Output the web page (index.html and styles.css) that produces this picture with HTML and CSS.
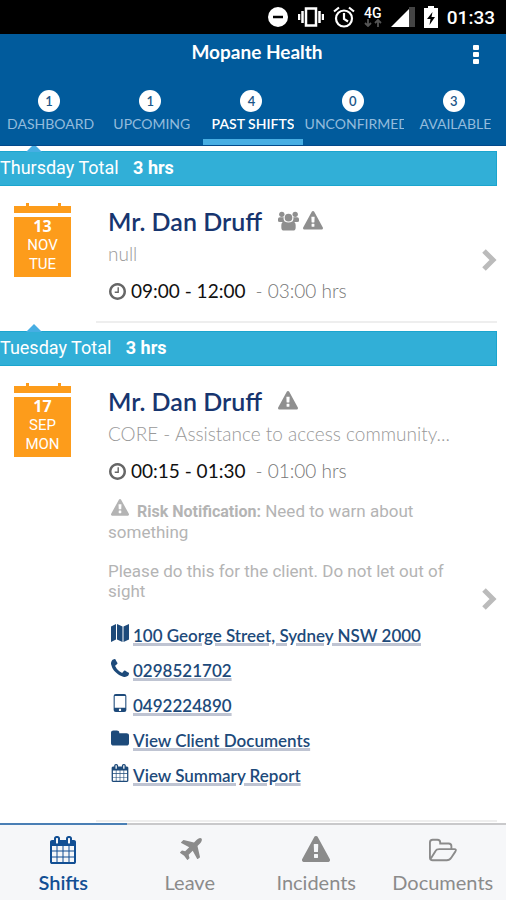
FILE: index.html
```html
<!DOCTYPE html>
<html lang="en">
<head>
<meta charset="utf-8">
<meta name="viewport" content="width=device-width, initial-scale=1">
<title>Mopane Health</title>
<link rel="stylesheet" href="styles.css">
</head>
<body>
<svg class="defs" aria-hidden="true">
  <symbol id="warning" viewBox="0 0 1792 1792"><path d="M1024 1375v-190q0-14-9.500-23.500t-22.500-9.500h-192q-13 0-22.500 9.500t-9.500 23.500v190q0 14 9.500 23.500t22.500 9.500h192q13 0 22.500-9.500t9.500-23.500zm-2-374l18-459q0-12-10-19-13-11-24-11h-220q-11 0-24 11-10 7-10 21l17 457q0 10 10 16.500t24 6.500h185q14 0 23.500-6.500t10.500-16.500zm-14-934l768 1408q35 63-2 126-17 29-46.500 46t-63.500 17h-1536q-34 0-63.500-17t-46.500-46q-37-63-2-126l768-1408q17-31 47-49t65-18 65 18 47 49z"/></symbol>
  <symbol id="clock" viewBox="128 128 1536 1536"><path d="M1024 544v448q0 14-9 23t-23 9h-320q-14 0-23-9t-9-23v-64q0-14 9-23t23-9h224v-352q0-14 9-23t23-9h64q14 0 23 9t9 23zm416 352q0-148-73-273t-198-198-273-73-273 73-198 198-73 273 73 273 198 198 273 73 273-73 198-198 73-273zm224 0q0 209-103 385.500t-279.500 279.500-385.500 103-385.500-103-279.500-279.500-103-385.500 103-385.500 279.500-279.500 385.500-103 385.500 103 279.500 279.500 103 385.500z"/></symbol>
  <symbol id="calendar" viewBox="0 0 1792 1792"><path d="M192 1664h288v-288h-288v288zm352 0h320v-288h-320v288zm-352-352h288v-320h-288v320zm352 0h320v-320h-320v320zm-352-384h288v-288h-288v288zm736 736h320v-288h-320v288zm-384-736h320v-288h-320v288zm768 736h288v-288h-288v288zm-384-352h320v-320h-320v320zm-352-864v-288q0-13-9.500-22.500t-22.500-9.500h-64q-13 0-22.500 9.500t-9.500 22.500v288q0 13 9.500 22.500t22.500 9.500h64q13 0 22.500-9.500t9.500-22.500zm736 864h288v-320h-288v320zm-384-384h320v-288h-320v288zm384 0h288v-288h-288v288zm32-480v-288q0-13-9.500-22.500t-22.500-9.500h-64q-13 0-22.500 9.500t-9.500 22.500v288q0 13 9.500 22.500t22.500 9.500h64q13 0 22.500-9.500t9.500-22.500zm384-64v1280q0 52-38 90t-90 38h-1408q-52 0-90-38t-38-90v-1280q0-52 38-90t90-38h128v-96q0-66 47-113t113-47h64q66 0 113 47t47 113v96h384v-96q0-66 47-113t113-47h64q66 0 113 47t47 113v96h128q52 0 90 38t38 90z"/></symbol>
  <symbol id="plane" viewBox="0 0 1792 1792"><path d="M1632 160q44 52 12 148t-108 172l-161 161 160 696q5 19-12 33l-128 96q-7 6-19 6-4 0-7-1-15-3-21-16l-279-508-259 259 53 194q5 17-8 31l-96 96q-9 9-23 9h-2q-15-2-24-13l-189-252-252-189q-11-7-13-23-1-13 9-25l96-97q9-9 23-9 6 0 8 1l194 53 259-259-508-279q-14-8-17-24-2-16 9-27l128-128q14-13 30-8l665 159 160-160q76-76 172-108t148 12z"/></symbol>
  <symbol id="folder" viewBox="64 64 1664 1536"><path d="M1728 608v704q0 92-66 158t-158 66h-1216q-92 0-158-66t-66-158v-960q0-92 66-158t158-66h320q92 0 158 66t66 158v32h672q92 0 158 66t66 158z"/></symbol>
  <symbol id="phone" viewBox="192 128 1408 1408"><path d="M1600 1240q0 27-10 70.500t-21 68.500q-21 50-122 106-94 51-186 51-27 0-52.500-3.500t-57.500-12.500-47.500-14.500-55.500-20.500-49-18q-98-35-175-83-128-79-264.500-215.500t-215.500-264.500q-48-77-83-175-3-9-18-49t-20.500-55.500-14.500-47.500-12.500-57.500-3.500-52.500q0-92 51-186 56-101 106-122 25-11 68.500-21t70.500-10q14 0 21 3 18 6 53 76 11 19 30 54t35 63.500 31 53.500q3 4 17.500 25t21.500 35.500 7 28.500q0 20-28.500 50t-62 55-62 53-28.500 46q0 9 5 22.500t8.500 20.500 14 24 11.500 19q76 137 174 235t235 174q2 1 19 11.500t24 14 20.500 8.500 22.500 5q18 0 46-28.500t53-62 55-62 50-28.500q14 0 28.500 7t35.500 21.500 25 17.500q25 15 53.500 31t63.500 35 54 30q70 35 76 53 3 7 3 21z"/></symbol>
  <symbol id="users" viewBox="0 0 22 20"><circle cx="4" cy="3" r="2.800"/><circle cx="18" cy="3" r="2.800"/><path d="M0 10V8q0-2 2-2h4q-1 2 1 5H2q-2 0-2-1zM22 10V8q0-2-2-2h-4q1 2-1 5h5q2 0 2-1z"/><circle cx="11" cy="6.500" r="4"/><path d="M3.500 17v-2.500q0-4 3.500-4 4 2 8 0 3.500 0 3.500 4V17q0 3-3 3h-9q-3 0-3-3z"/></symbol>
  <symbol id="map" viewBox="0 0 18 18"><path d="M0 2.500 5 0v15.500L0 18zM6 0l5.500 2.500V18L6 15.500zM12.500 2.500 18 0v15.500L12.500 18z"/></symbol>
  <symbol id="mobile" viewBox="0 0 12 17"><path fill-rule="evenodd" d="M2 0h8q2 0 2 2v13q0 2-2 2H2q-2 0-2-2V2q0-2 2-2zM1 2v11h10V2zM5 14v2h2v-2z"/></symbol>
  <symbol id="chevron" viewBox="0 0 16 24"><path class="chevron-line" d="M3 3l9 9-9 9"/></symbol>
</svg>

<header class="header">
  <div class="status">
    <svg width="22" height="22" viewBox="0 0 22 22" aria-hidden="true"><circle cx="11" cy="11" r="10" fill="#fff"/><path d="M6 11h10" stroke="#000" stroke-width="2.500"/></svg>
    <svg width="26" height="22" viewBox="0 0 26 22" aria-hidden="true"><path d="M8 2.500h10v17H8zM4.500 5v12M21.500 5v12M1 8v6M25 8v6" fill="none" stroke="#fff" stroke-width="2.500"/></svg>
    <svg width="22" height="22" viewBox="0 0 22 22" aria-hidden="true"><g fill="none" stroke="#fff" stroke-width="2.200"><circle cx="11" cy="12.500" r="8"/><path d="M11 7v6l4 2.500M1 5.500l5-4M21 5.500l-5-4"/></g></svg>
    <span class="network">4G<svg width="18" height="8" viewBox="0 0 18 8" aria-hidden="true"><path d="M4 0v7M1 4l3 3 3-3M14 8V1M11 4l3-3 3 3" fill="none" stroke="#555" stroke-width="1.800"/></svg></span>
    <svg width="24" height="20" viewBox="0 0 24 20" aria-hidden="true"><path d="M18 0h6v20h-6z" fill="#444"/><path d="M0 20 18 2v18z" fill="#fff"/></svg>
    <svg width="14" height="22" viewBox="0 0 14 22" aria-hidden="true"><path d="M0 2h4V0h6v2h4v20H0z" fill="#fff"/><path d="M8.500 6 3 13h3.500l-1 6L11 11H7.500z" fill="#000"/></svg>
    <span class="time">01:33</span>
  </div>
  <div class="appbar">
    <h1 class="title">Mopane Health</h1>
    <button class="more" aria-label="More options"><i></i><i></i><i></i></button>
  </div>
  <nav class="tabs" aria-label="Shift lists">
    <a class="tab" href="#dashboard"><span class="badge">1</span><span class="tab-label">DASHBOARD</span></a>
    <a class="tab" href="#upcoming"><span class="badge">1</span><span class="tab-label">UPCOMING</span></a>
    <a class="tab tab-active" href="#past"><span class="badge">4</span><span class="tab-label">PAST SHIFTS</span></a>
    <a class="tab" href="#unconfirmed"><span class="badge">0</span><span class="tab-label">UNCONFIRMED</span></a>
    <a class="tab" href="#available"><span class="badge">3</span><span class="tab-label">AVAILABLE</span></a>
  </nav>
</header>

<main class="list">
  <section class="day">
    <h2 class="banner">Thursday Total <b>3 hrs</b></h2>
    <article class="shift">
      <div class="date"><b>13</b><span>NOV</span><span>TUE</span></div>
      <div class="details">
        <h3 class="name">Mr. Dan Druff <svg class="flag group"><use href="#users"/></svg><svg class="flag"><use href="#warning"/></svg></h3>
        <p class="service">null</p>
        <p class="hours"><svg class="clock"><use href="#clock"/></svg>09:00 - 12:00 <span class="duration">- 03:00 hrs</span></p>
      </div>
      <svg class="chevron"><use href="#chevron"/></svg>
    </article>
  </section>
  <section class="day">
    <h2 class="banner">Tuesday Total <b>3 hrs</b></h2>
    <article class="shift">
      <div class="date"><b>17</b><span>SEP</span><span>MON</span></div>
      <div class="details">
        <h3 class="name">Mr. Dan Druff <svg class="flag"><use href="#warning"/></svg></h3>
        <p class="service">CORE - Assistance to access community...</p>
        <p class="hours"><svg class="clock"><use href="#clock"/></svg>00:15 - 01:30 <span class="duration">- 01:00 hrs</span></p>
        <div class="risk">
          <p><svg class="risk-icon"><use href="#warning"/></svg><b>Risk Notification:</b> Need to warn about something</p>
          <p>Please do this for the client. Do not let out of sight</p>
        </div>
        <ul class="links">
          <li><svg><use href="#map"/></svg><a href="#map-view">100 George Street, Sydney NSW 2000</a></li>
          <li><svg><use href="#phone"/></svg><a href="tel:0298521702">0298521702</a></li>
          <li><svg><use href="#mobile"/></svg><a href="tel:0492224890">0492224890</a></li>
          <li><svg><use href="#folder"/></svg><a href="#client-documents">View Client Documents</a></li>
          <li><svg><use href="#calendar"/></svg><a href="#summary">View Summary Report</a></li>
        </ul>
      </div>
      <svg class="chevron"><use href="#chevron"/></svg>
    </article>
  </section>
  <section class="day"><div class="banner"></div></section>
</main>

<nav class="bottom" aria-label="Main">
  <a class="item item-active" href="#shifts"><svg><use href="#calendar"/></svg>Shifts</a>
  <a class="item" href="#leave"><svg><use href="#plane"/></svg>Leave</a>
  <a class="item" href="#incidents"><svg><use href="#warning"/></svg>Incidents</a>
  <a class="item" href="#documents"><svg class="open-folder" viewBox="0 0 30 28"><path d="M1 20V6q0-3 3-3h5q3 0 3 3v1h9q3 0 3 3v3M2 23l5-8q1-2 4-2h16q3 0 1 3l-4 6q-2 3-5 3H4q-3 0-3-3v-2"/></svg>Documents</a>
</nav>
</body>
</html>
```
FILE: styles.css
```css
* { box-sizing: border-box; }

body {
  margin: 0;
  height: 100vh;
  display: flex;
  flex-direction: column;
  background: #fff;
  font-family: Lato, "Liberation Sans", sans-serif;
}

h1, h2, h3, p, ul { margin: 0; padding: 0; font-weight: 400; }
a { color: inherit; text-decoration: none; }
svg { fill: currentColor; flex: none; }
.defs { position: absolute; width: 0; height: 0; }

.header {
  position: relative;
  z-index: 1;
  background: #015b9c;
  color: #fff;
}

.status {
  height: 34px;
  padding: 0 11px;
  display: flex;
  align-items: center;
  justify-content: flex-end;
  gap: 9px;
  background: #000;
  font-family: Roboto, sans-serif;
}
.network {
  display: flex;
  flex-direction: column;
  align-items: center;
  font-size: 14px;
  line-height: 12px;
  font-weight: 500;
}
.time { font-size: 19px; font-weight: 500; }

.appbar {
  height: 46px;
  padding: 6px 0;
  display: grid;
  grid-template-columns: 56px 1fr 48px;
}
.title {
  grid-column: 2;
  text-align: center;
  font-size: 19px;
  line-height: 24px;
  font-weight: 700;
}
.more {
  height: 28px;
  margin-right: 12px;
  padding: 0;
  display: flex;
  flex-direction: column;
  align-items: center;
  justify-content: center;
  gap: 2px;
  border: 0;
  background: none;
}
.more i { width: 6px; height: 5px; border-radius: 1px; background: #fff; }

.tabs {
  height: 66px;
  display: grid;
  grid-template-columns: repeat(5, minmax(0, 1fr));
  border-bottom: 1px solid #024a8c;
}
.tab {
  margin: 0 1px;
  padding-top: 10px;
  display: flex;
  flex-direction: column;
  align-items: center;
  gap: 2px;
  color: #93bcdc;
  border-bottom: 6px solid transparent;
}
.tab-active { color: #fff; font-weight: 600; border-color: #47aee3; }
.badge {
  width: 22px;
  height: 22px;
  margin-right: 3px;
  border-radius: 50%;
  background: #fff;
  color: #1c5688;
  font-size: 13px;
  line-height: 22px;
  font-weight: 600;
  text-align: center;
}
.tab-label {
  max-width: 100%;
  overflow: hidden;
  white-space: nowrap;
  font-size: 14px;
  line-height: 20px;
}

.list { flex: 1; min-height: 0; overflow: hidden; padding-right: 9px; }
.day { padding-top: 8px; }
.day:first-child { margin-top: -3px; }
.banner {
  position: relative;
  height: 35px;
  border: 1px solid #1ba5ce;
  border-left: 0;
  background: #31afd7;
  color: #fff;
  font-family: Roboto, sans-serif;
  font-size: 18px;
  line-height: 31px;
}
.banner b { margin-left: 10px; }
.banner::before {
  content: "";
  position: absolute;
  left: 26px;
  bottom: 100%;
  border: 8px solid transparent;
  border-top: 0;
  border-bottom-color: #47aee3;
}

.shift { display: flex; }
.date {
  position: relative;
  width: 57px;
  height: 60px;
  margin: 31px 25px 0 14px;
  display: flex;
  flex-direction: column;
  background: #fd9c1b;
  color: #fff;
  font-family: Roboto, sans-serif;
  font-size: 15px;
  line-height: 19px;
  text-align: center;
}
.date b { font-family: "Open Sans", sans-serif; font-size: 16px; }
.date::before {
  content: "";
  position: absolute;
  left: 0;
  right: 0;
  bottom: 100%;
  height: 14px;
  background:
    linear-gradient(#fd9c1b, #fd9c1b) 12px 0 / 3px 4px no-repeat,
    linear-gradient(#fd9c1b, #fd9c1b) 44px 0 / 3px 4px no-repeat,
    linear-gradient(#fd9c1b, #fd9c1b) 0 3px / 100% 7px no-repeat;
}

.details {
  flex: 1;
  min-width: 0;
  padding: 19px 16px 14px 12px;
  border-bottom: 2px solid #eee;
}
.name {
  display: flex;
  align-items: center;
  color: #17356f;
  font-size: 25px;
  line-height: 32px;
  font-weight: 600;
}
.flag { width: 20px; height: 20px; margin-left: 4px; color: #8f8f8f; }
.flag:first-of-type { margin-left: 16px; }
.flag.group { width: 21px; }
.service {
  overflow: hidden;
  white-space: nowrap;
  color: #999;
  font-size: 19px;
  line-height: 34px;
  font-weight: 300;
}
.hours {
  display: flex;
  align-items: center;
  margin-top: 4px;
  color: #111;
  font-size: 19px;
  line-height: 32px;
}
.clock { width: 17px; height: 17px; margin: 0 5px 0 1px; color: #666; }
.duration { margin-left: 10px; color: #777; font-weight: 300; }

.risk {
  max-width: 350px;
  padding-top: 12px;
  display: grid;
  gap: 19px;
  color: #b4b4b4;
  font-family: Roboto, sans-serif;
  font-size: 17px;
  line-height: 20px;
}
.risk b { font-size: 16px; }
.risk-icon { width: 20px; height: 18px; margin: 0 7px 0 2px; }

.links {
  padding: 17px 0 13px;
  list-style: none;
  color: #1d4a7a;
}
.links li { height: 35px; display: flex; align-items: center; gap: 4px; font-size: 17px; }
.links svg { width: 18px; height: 18px; margin: 0 0 6px 3px; }
.links a {
  font-weight: 600;
  text-decoration: underline;
  text-decoration-color: #bfc4d2;
  text-decoration-thickness: 3px;
  text-underline-offset: 1px;
}

.chevron {
  align-self: center;
  width: 16px;
  height: 24px;
  margin: 10px 0 0 -16px;
  color: #bbb;
}
.chevron-line { fill: none; stroke: currentColor; stroke-width: 5; }

.bottom {
  position: relative;
  z-index: 1;
  height: 77px;
  display: grid;
  grid-template-columns: repeat(4, minmax(0, 1fr));
  background: #f6f7f9;
  color: #8b8b8b;
}
.item {
  padding-top: 11px;
  display: flex;
  flex-direction: column;
  align-items: center;
  gap: 4px;
  border-top: 2px solid #c9c9cb;
  font-size: 20px;
  line-height: 28px;
}
.item svg { width: 28px; height: 28px; }
.item-active { color: #124f94; border-color: #4a7fb5; font-weight: 600; }
.open-folder { fill: none; stroke: currentColor; stroke-width: 2; }
```
